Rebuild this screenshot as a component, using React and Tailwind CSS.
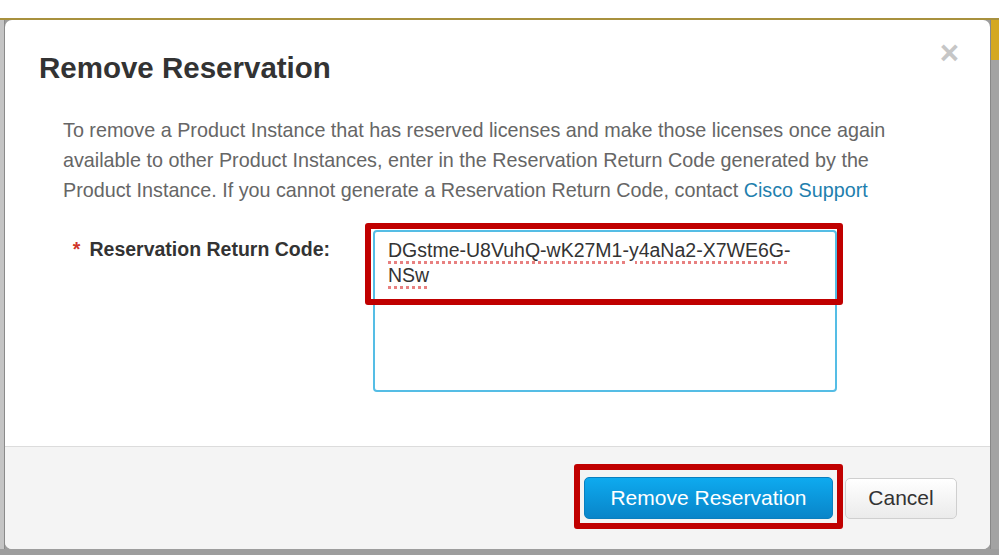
import React from "react";

const App = () => {
  return (
    <div
      className="w-[999px] h-[555px] bg-white flex flex-col overflow-hidden"
      style={{ fontFamily: '"Liberation Sans", Arial, Helvetica, sans-serif' }}
    >
      <div className="h-[18px] bg-white flex-none" />
      <div className="flex-1 flex bg-[#9d9d9d] border-t-2 border-[#a8913e] pb-[6px]">
        <div className="w-[5px] flex-none bg-[#c4c4c4] border-r border-[#8a8a8a]" />
        <div className="flex-1 bg-white rounded-[7px] flex flex-col overflow-hidden">
          <div className="flex items-start justify-between pl-[34px] pr-[31px] pt-[32px]">
            <h1 className="text-[29.5px] leading-[32px] font-bold text-[#333]">Remove Reservation</h1>
            <span className="text-[33px] leading-[26px] font-bold text-[#c6c6c6] -mt-[12px]">×</span>
          </div>
          <div className="flex-1 flex flex-col pl-[58px] pt-[31px]">
            <p className="w-[860px] text-[19.75px] leading-[30px] text-[#666]">
              To remove a Product Instance that has reserved licenses and make those licenses once again
              <br />
              available to other Product Instances, enter in the Reservation Return Code generated by the
              <br />
              Product Instance. If you cannot generate a Reservation Return Code, contact{" "}
              <a className="text-[#1f7fae]">Cisco Support</a>
            </p>
            <div className="flex items-start mt-[25px]">
              <label className="w-[267px] flex-none text-right text-[19.5px] leading-[25px] font-bold text-[#333] mt-[7px]">
                <span className="text-[#d0362a] mr-[9px]">*</span>Reservation Return Code:
              </label>
              <div className="relative ml-[43px]">
                <div className="w-[464px] h-[162px] border-2 border-[#55bde5] rounded-[4px] bg-white px-[13px] pt-[6px] text-[19.5px] leading-[25px] text-[#333]">
                  <span className="underline decoration-dotted decoration-[3px] decoration-[#e88080] underline-offset-[4px]">
                    DGstme-U8VuhQ-wK27M1-y4aNa2-X7WE6G-
                  </span>
                  <br />
                  <span className="underline decoration-dotted decoration-[3px] decoration-[#e88080] underline-offset-[4px]">
                    NSw
                  </span>
                </div>
                <div className="absolute -left-[8px] -top-[7px] w-[478px] h-[82px] border-[6px] border-[#c00000] rounded-[3px]" />
              </div>
            </div>
          </div>
          <div className="h-[103px] flex-none bg-[#f4f4f4] border-t border-[#dcdcdc] flex items-center justify-end gap-[12px] pr-[33px]">
            <div className="relative">
              <button className="w-[249px] h-[42px] rounded-[5px] bg-gradient-to-b from-[#0eaaef] to-[#0985c9] border border-[#0a7fbf] text-white text-[21px]">
                Remove Reservation
              </button>
              <div className="absolute -left-[10px] -top-[13px] -right-[10px] -bottom-[10px] border-[6px] border-[#c00000] rounded-[3px]" />
            </div>
            <button className="w-[112px] h-[41px] rounded-[5px] bg-gradient-to-b from-white to-[#ebebeb] border border-[#cfcfcf] text-[#333] text-[21px]">
              Cancel
            </button>
          </div>
        </div>
        <div className="w-[9px] flex-none flex flex-col border-l border-[#888]">
          <div className="h-[40px] bg-[#d4a820]" />
          <div className="flex-1 bg-[#a3a3a3]" />
        </div>
      </div>
    </div>
  );
};

export default App;
